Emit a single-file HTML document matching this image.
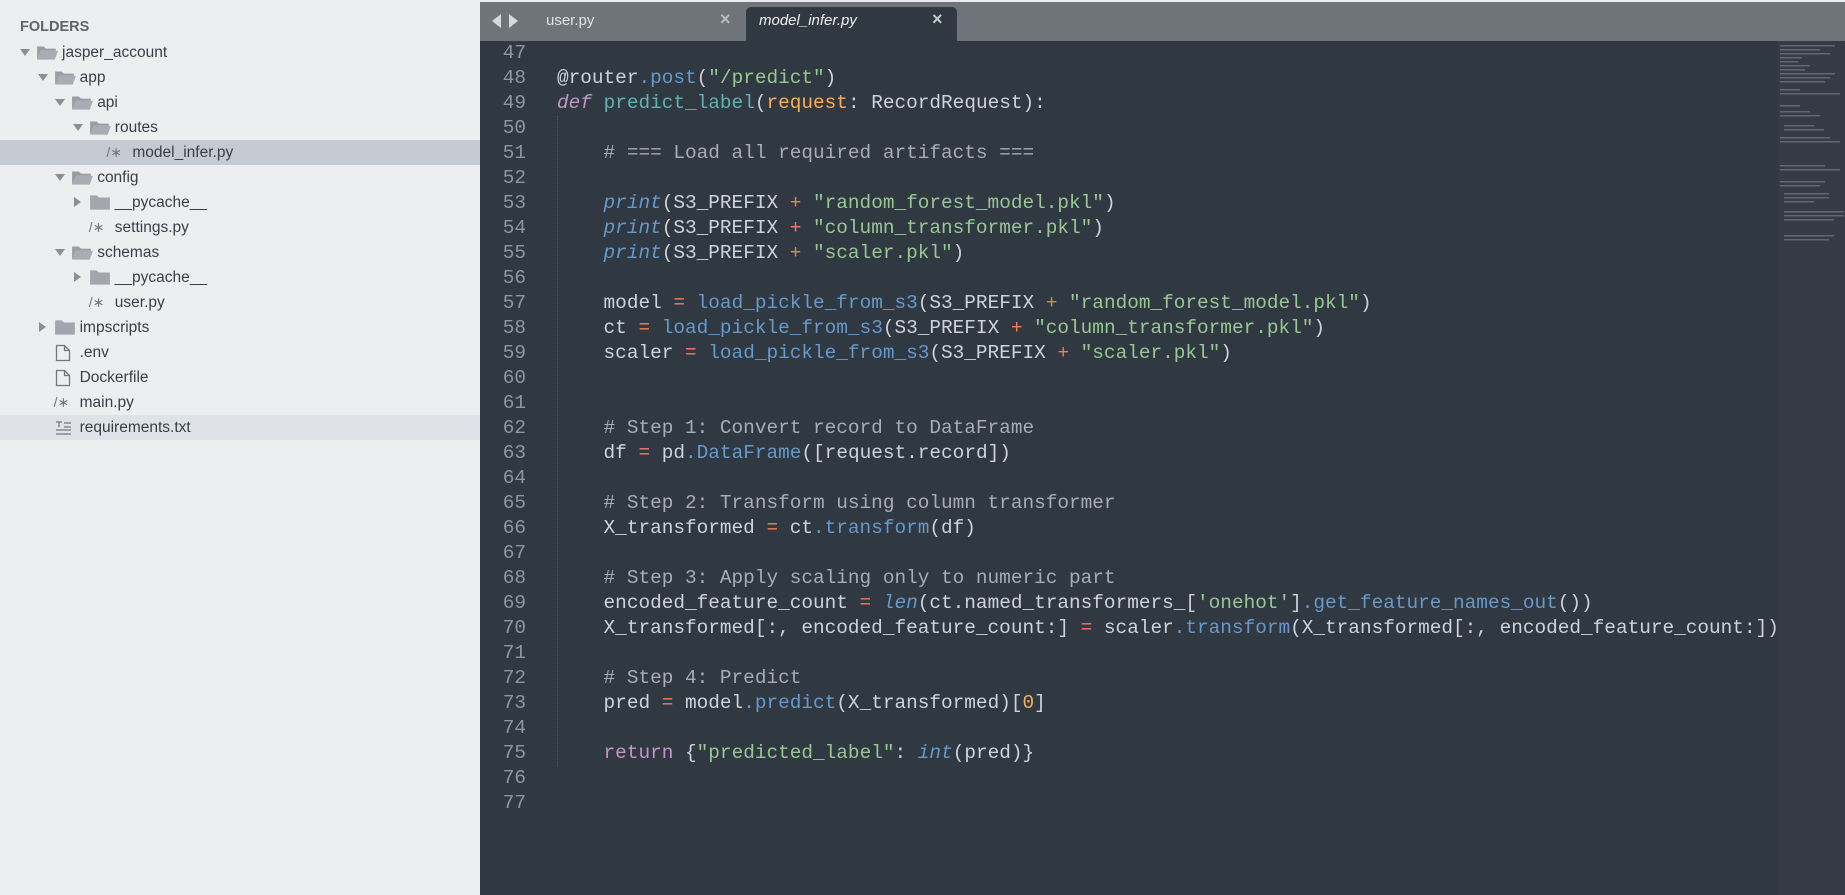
<!DOCTYPE html>
<html><head><meta charset="utf-8"><style>
*{margin:0;padding:0;box-sizing:border-box}
body{width:1845px;height:895px;overflow:hidden;background:#303841;position:relative;font-family:"Liberation Sans",sans-serif}
#side{position:absolute;left:0;top:0;width:480px;height:895px;background:#eceef0}
.row{position:absolute;left:0;width:480px;height:25px;line-height:25px;font-size:15.5px;color:#3a3f47;white-space:nowrap}
.row.sel{background:#c6cad2}
.row.hl{background:#dfe2e6}
.row span{position:absolute;top:0}
.arr{position:absolute;width:0;height:0}
.ad{border-left:5px solid transparent;border-right:5px solid transparent;border-top:7px solid #8a8f96;top:9px}
.ar{border-top:5px solid transparent;border-bottom:5px solid transparent;border-left:7px solid #8a8f96;top:7px}
.fo{position:absolute;top:4px;width:22px;height:17px}
.fi{color:#777;font-size:14px}
#tabs{position:absolute;left:480px;top:0;width:1365px;height:41px;background:#6f747b;border-top:2px solid #e9ebee}
.code{position:absolute;left:480px;top:41px;font-family:"Liberation Mono",monospace;font-size:19.4px;color:#cdd3dc}
.ln{position:absolute;width:46px;text-align:right;color:#8f96a3;height:25px;line-height:25px;left:0}
.cl{position:absolute;left:77px;height:25px;line-height:25px;white-space:pre}
.k{color:#c594c5;font-style:italic}.f{color:#5fb3b3}.p{color:#f9ae58}.s{color:#99c794}.o{color:#f97b58}.b{color:#6699cc}.bi{color:#6699cc;font-style:italic}.c{color:#a6acb9}.n{color:#f9ae58}
#mini{position:absolute;left:1778px;top:41px;width:67px;height:854px;background:#343b45}
</style></head><body>
<div id="side">
<div class="row" style="top:15px;font-weight:bold;font-size:14.5px;color:#5f646b"><span style="left:20px">FOLDERS</span></div>
</div>
<div id="tabs">
<svg style="position:absolute;left:12px;top:12px" width="30" height="14"><path d="M0 7 L9 0 L9 14Z" fill="#d6d9dd"/><path d="M17 0 L26 7 L17 14Z" fill="#d6d9dd"/></svg>
<div style="position:absolute;left:66px;top:10px;color:#e0e3e7;font-size:15px">user.py</div>
<div style="position:absolute;left:240px;top:7px;color:#b9bcc1;font-size:18px;font-weight:bold">×</div>
<div style="position:absolute;left:266px;top:5px;width:211px;height:36px;background:#303841;border-radius:5px 5px 0 0"></div>
<div style="position:absolute;left:279px;top:10px;color:#f0f2f4;font-size:15px;font-style:italic">model_infer.py</div>
<div style="position:absolute;left:452px;top:7px;color:#c6c9ce;font-size:18px;font-weight:bold">×</div>
</div>
<div id="mini"></div>
<svg style="position:absolute;left:1780px;top:45px" width="65" height="200" opacity="0.5">
<g fill="#8a93a3">
<rect x="0" y="0" width="55" height="1.5"/><rect x="0" y="4" width="40" height="1.5"/><rect x="0" y="8" width="50" height="1.5"/><rect x="0" y="12" width="22" height="1.5"/><rect x="0" y="16" width="18" height="1.5"/><rect x="0" y="20" width="30" height="1.5"/><rect x="0" y="24" width="25" height="1.5"/><rect x="0" y="28" width="55" height="1.5"/><rect x="0" y="32" width="50" height="1.5"/><rect x="0" y="36" width="45" height="1.5"/><rect x="0" y="44" width="20" height="1.5"/><rect x="0" y="48" width="60" height="1.5"/><rect x="0" y="60" width="20" height="1.5"/><rect x="0" y="66" width="30" height="1.5"/><rect x="0" y="70" width="40" height="1.5"/><rect x="4" y="80" width="30" height="1.5"/><rect x="4" y="84" width="40" height="1.5"/><rect x="0" y="92" width="50" height="1.5"/><rect x="0" y="96" width="60" height="1.5"/><rect x="0" y="120" width="45" height="1.5"/><rect x="0" y="124" width="60" height="1.5"/><rect x="0" y="136" width="45" height="1.5"/><rect x="0" y="140" width="40" height="1.5"/><rect x="4" y="148" width="45" height="1.5"/><rect x="4" y="152" width="45" height="1.5"/><rect x="4" y="156" width="30" height="1.5"/><rect x="4" y="166" width="60" height="1.5"/><rect x="4" y="170" width="60" height="1.5"/><rect x="4" y="174" width="50" height="1.5"/><rect x="4" y="190" width="50" height="1.5"/><rect x="4" y="194" width="45" height="1.5"/>
</g></svg>
<div style="position:absolute;left:557px;top:116px;height:650px;border-left:1px dotted #4d5562"></div>
<div class="code" id="code"></div>
<script>
var rows=[
[0,1,'d','jasper_account'],[1,1,'d','app'],[2,1,'d','api'],[3,1,'d','routes'],[4,0,'p','model_infer.py','sel'],
[2,1,'d','config'],[3,0,'c','__pycache__'],[3,0,'p','settings.py'],[2,1,'d','schemas'],[3,0,'c','__pycache__'],[3,0,'p','user.py'],
[1,0,'c','impscripts'],[1,0,'f','.env'],[1,0,'f','Dockerfile'],[1,0,'p','main.py'],[1,0,'t','requirements.txt','hl']];
var s=document.getElementById('side'),h='';
rows.forEach(function(r,i){
 var L=r[0],x=25+L*17.6,top=40+i*25,cls='row'+(r[4]?' '+r[4]:'');
 h+='<div class="'+cls+'" style="top:'+top+'px">';
 if(r[2]=='d') h+='<div class="arr ad" style="left:'+(x-5)+'px"></div><svg class="fo" style="left:'+(x+11)+'px" viewBox="0 0 20 15"><path d="M1 2 h6 l2 2 h9 v2 H5 L1 14Z" fill="#9a9ea4"/><path d="M1 14 L4 6 h16 l-3 8Z" fill="#a9adb3"/></svg><span style="left:'+(x+37)+'px">'+r[3]+'</span>';
 else if(r[2]=='c') h+='<div class="arr ar" style="left:'+(x-4)+'px"></div><svg class="fo" style="left:'+(x+11)+'px" viewBox="0 0 20 15"><path d="M1 1 h6 l2 2 h10 v11 H1Z" fill="#a3a7ad"/></svg><span style="left:'+(x+37)+'px">'+r[3]+'</span>';
 else if(r[2]=='p') h+='<span class="fi" style="left:'+(x+11)+'px">/∗</span><span style="left:'+(x+37)+'px">'+r[3]+'</span>';
 else if(r[2]=='f') h+='<svg style="position:absolute;left:'+(x+12)+'px;top:4px" width="16" height="18"><path d="M1.5 1.5 h8 l5 5 v10 h-13Z M9.5 1.5 v5 h5" fill="none" stroke="#777" stroke-width="1.3"/></svg><span style="left:'+(x+37)+'px">'+r[3]+'</span>';
 else h+='<svg style="position:absolute;left:'+(x+12)+'px;top:5px" width="17" height="16"><path d="M1 2h6M4 2v5M9 3h7M9 7h7M1 10h15M1 14h15" stroke="#777" stroke-width="1.3"/></svg><span style="left:'+(x+37)+'px">'+r[3]+'</span>';
 h+='</div>';});
s.innerHTML+=h;
var I='    ';
var code=[
'',
'@router<span class="b">.post</span>(<span class="s">"/predict"</span>)',
'<span class="k">def</span> <span class="f">predict_label</span>(<span class="p">request</span>: RecordRequest):',
'',
I+'<span class="c"># === Load all required artifacts ===</span>',
'',
I+'<span class="bi">print</span>(S3_PREFIX <span class="o">+</span> <span class="s">"random_forest_model.pkl"</span>)',
I+'<span class="bi">print</span>(S3_PREFIX <span class="o">+</span> <span class="s">"column_transformer.pkl"</span>)',
I+'<span class="bi">print</span>(S3_PREFIX <span class="o">+</span> <span class="s">"scaler.pkl"</span>)',
'',
I+'model <span class="o">=</span> <span class="b">load_pickle_from_s3</span>(S3_PREFIX <span class="o">+</span> <span class="s">"random_forest_model.pkl"</span>)',
I+'ct <span class="o">=</span> <span class="b">load_pickle_from_s3</span>(S3_PREFIX <span class="o">+</span> <span class="s">"column_transformer.pkl"</span>)',
I+'scaler <span class="o">=</span> <span class="b">load_pickle_from_s3</span>(S3_PREFIX <span class="o">+</span> <span class="s">"scaler.pkl"</span>)',
'','',
I+'<span class="c"># Step 1: Convert record to DataFrame</span>',
I+'df <span class="o">=</span> pd<span class="b">.DataFrame</span>([request.record])',
'',
I+'<span class="c"># Step 2: Transform using column transformer</span>',
I+'X_transformed <span class="o">=</span> ct<span class="b">.transform</span>(df)',
'',
I+'<span class="c"># Step 3: Apply scaling only to numeric part</span>',
I+'encoded_feature_count <span class="o">=</span> <span class="bi">len</span>(ct.named_transformers_[<span class="s">\'onehot\'</span>]<span class="b">.get_feature_names_out</span>())',
I+'X_transformed[:, encoded_feature_count:] <span class="o">=</span> scaler<span class="b">.transform</span>(X_transformed[:, encoded_feature_count:])',
'',
I+'<span class="c"># Step 4: Predict</span>',
I+'pred <span class="o">=</span> model<span class="b">.predict</span>(X_transformed)[<span class="n">0</span>]',
'',
I+'<span class="k" style="font-style:normal">return</span> {<span class="s">"predicted_label"</span>: <span class="bi">int</span>(pred)}',
'',''];
var c='';
code.forEach(function(t,i){var y=i*25;c+='<div class="ln" style="top:'+y+'px">'+(47+i)+'</div><div class="cl" style="top:'+y+'px">'+t+'</div>';});
document.getElementById('code').innerHTML=c;
</script>
</body></html>
